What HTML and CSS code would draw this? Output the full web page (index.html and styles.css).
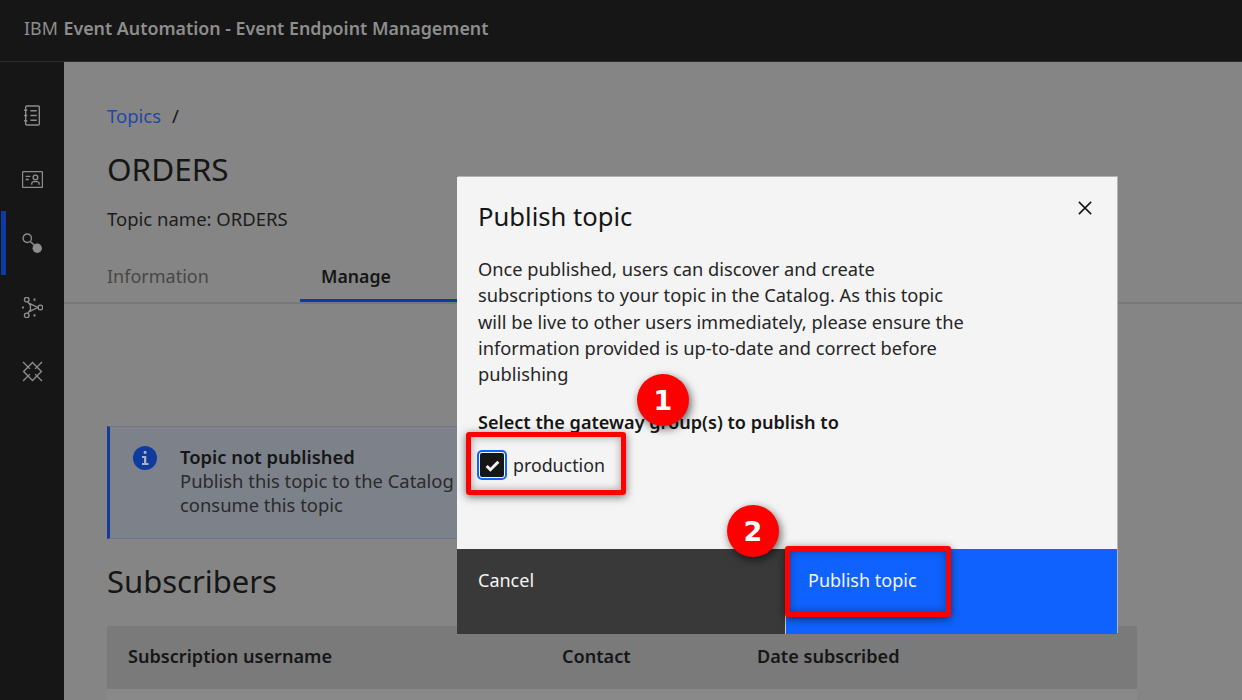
FILE: index.html
```html
<!DOCTYPE html>
<html lang="en">
<head>
    <meta charset="UTF-8">
    <meta name="viewport" content="width=device-width, initial-scale=1.0">
    <title>Publish topic</title>
    <link rel="stylesheet" href="styles.css">
</head>
<body>
    <header class="topbar">
        <span class="brand">IBM</span>&nbsp;<strong class="brand-name">Event Automation - Event Endpoint Management</strong>
    </header>

    <div class="layout">
        <nav class="sidebar">
            <a class="nav-item">
                <svg viewBox="0 0 20 20" class="nav-icon"><path d="M4.500 1h11a1 1 0 0 1 1 1v16a1 1 0 0 1-1 1h-11a1 1 0 0 1-1-1V2a1 1 0 0 1 1-1z"/><path d="M2 5h3M2 10h3M2 15h3M8 5.500h6M8 10h6M8 14.500h6"/></svg>
            </a>
            <a class="nav-item">
                <svg viewBox="0 0 20 20" class="nav-icon"><rect x="0.500" y="2.500" width="19" height="15" rx="1"/><path d="M3.500 7h4.500M3.500 10h3"/><circle cx="12.800" cy="8" r="2.200"/><path d="M9.300 15v-1a2 2 0 0 1 2-2h3a2 2 0 0 1 2 2v1"/></svg>
            </a>
            <a class="nav-item active">
                <svg viewBox="0 0 20 20" class="nav-icon"><circle cx="5" cy="5" r="4"/><path d="M8 8l4 4"/><circle class="solid" cx="14.500" cy="14.500" r="4.500"/></svg>
            </a>
            <a class="nav-item">
                <svg viewBox="0 0 20 20" class="nav-icon"><circle cx="4.500" cy="2.500" r="2.200"/><circle cx="4.500" cy="17.500" r="2.200"/><circle cx="17.500" cy="10" r="2.200"/><path d="M5.500 4.500l3 4M5.500 15.500l3-4M8 6.500v7l7-3.500z"/><path d="M0 10h1.800M11 2.500h1.800M11 17.500h1.800" stroke-width="2"/></svg>
            </a>
            <a class="nav-item">
                <svg viewBox="0 0 20 20" class="nav-icon"><path d="M1 1l6.500 6.500M19 1l-6.500 6.500M1 19l6.500-6.500M19 19l-6.500-6.500"/><path d="M10 1.500L18.500 10 10 18.500 1.500 10z"/></svg>
            </a>
        </nav>

        <main class="content">
            <div class="breadcrumb"><a class="crumb-link">Topics</a><span class="crumb-sep">/</span></div>
            <h1 class="page-title">ORDERS</h1>
            <p class="topic-name">Topic name: ORDERS</p>

            <div class="tabs">
                <a class="tab">Information</a>
                <a class="tab selected">Manage</a>
            </div>

            <section class="notification">
                <svg class="info-icon" viewBox="0 0 24 24"><circle cx="12" cy="12" r="12" fill="#0f3c9c"/><rect x="10.800" y="5" width="2.600" height="2.800" fill="#a9b3c4"/><path d="M9 10h4.300v7H15.500v2h-6.500v-2h2v-5H9z" fill="#a9b3c4"/></svg>
                <div class="notification-text">
                    <strong>Topic not published</strong><br>
                    Publish this topic to the Catalog so that users can subscribe and<br>
                    consume this topic
                </div>
            </section>

            <h2 class="section-title">Subscribers</h2>

            <div class="table-head">
                <span class="col-user">Subscription username</span>
                <span class="col-contact">Contact</span>
                <span class="col-date">Date subscribed</span>
            </div>
            <div class="table-row"></div>
        </main>
    </div>

    <div class="modal">
        <div class="modal-body">
            <svg class="modal-close" viewBox="0 0 16 16"><path d="M1 1l14 14M15 1L1 15"/></svg>
            <h3 class="modal-title">Publish topic</h3>
            <p class="modal-text">
                Once published, users can discover and create<br>
                subscriptions to your topic in the Catalog. As this topic<br>
                will be live to other users immediately, please ensure the<br>
                information provided is up-to-date and correct before<br>
                publishing
            </p>
            <p class="modal-label">Select the gateway group(s) to publish to</p>
            <label class="check-row">
                <span class="check-box">
                    <svg viewBox="0 0 16 16"><path d="M2.500 8.500l3.500 3.500L13.500 4.500"/></svg>
                </span>
                production
            </label>
        </div>
        <div class="modal-footer">
            <button class="btn btn-cancel">Cancel</button>
            <button class="btn btn-primary">Publish topic</button>
        </div>
    </div>

    <!-- tutorial annotations -->
    <div class="callout callout-check"></div>
    <div class="callout callout-publish"></div>
    <div class="step step-one">1</div>
    <div class="step step-two">2</div>
</body>
</html>
```

FILE: styles.css
```css
* {
    box-sizing: border-box;
}
html, body {
    height: 700px;
    overflow: hidden;
}
body {
    margin: 0;
    font-family: "Noto Sans", Arial, sans-serif;
    font-size: 18px;
    color: #161616;
    background: #858585;
}
.topbar {
    height: 62px;
    padding-left: 24px;
    display: flex;
    align-items: center;
    padding-bottom: 6px;
    background: #161616;
    border-bottom: 1px solid #2c2c2c;
    color: #8d8d8d;
    font-size: 17.830px;
    white-space: pre;
}
.brand-name {
    margin-left: 1px;
    font-weight: 600;
}
.layout {
    display: flex;
    height: 638px;
}
.sidebar {
    width: 64px;
    flex: none;
    padding-top: 21px;
    background: #161616;
}
.nav-item {
    height: 64px;
    display: flex;
    align-items: center;
    justify-content: center;
    margin-left: 1px;
    border-left: 5px solid transparent;
    padding-right: 6px;
}
.nav-item.active {
    border-left-color: #0f3c9c;
}
.nav-icon {
    width: 21px;
    height: 21px;
    fill: none;
    stroke: #8d8d8d;
    stroke-width: 1.300;
}
.nav-icon .solid {
    fill: #8d8d8d;
    stroke: none;
}
.content {
    flex: 1;
    min-width: 0;
}
.breadcrumb {
    height: 28px;
    margin: 39px 0 0 43px;
    display: flex;
    align-items: center;
    gap: 11px;
    font-size: 18.500px;
}
.crumb-link {
    color: #1f48a8;
}
.page-title {
    margin: 20px 0 0 43px;
    height: 40px;
    font-size: 31.500px;
    line-height: 40px;
    font-weight: 400;
}
.topic-name {
    margin: 18px 0 0 43px;
    height: 24px;
    line-height: 24px;
    font-size: 18.500px;
    color: #1c1c1c;
}
.tabs {
    display: flex;
    height: 49px;
    margin-top: 24px;
    padding-left: 22px;
    border-bottom: 2px solid #787878;
}
.tab {
    width: 214px;
    padding: 9px 21px 0;
    height: 47px;
    color: #474747;
}
.tab.selected {
    color: #161616;
    font-weight: 600;
    font-size: 17.700px;
    border-bottom: 3px solid #0f3c9c;
}
.notification {
    display: flex;
    width: 1000px;
    height: 113px;
    margin: 122px 0 0 43px;
    padding: 18px 0 0 23px;
    gap: 23px;
    background: #7d828a;
    border: 1px solid #68778f;
    border-left: 3px solid #0f3c9c;
    line-height: 24px;
    font-size: 18.400px;
    color: #2a2a2a;
}
.info-icon {
    width: 24px;
    height: 24px;
    margin-top: 1px;
    flex: none;
}
.notification-text strong {
    color: #161616;
    font-weight: 600;
}
.section-title {
    margin: 22px 0 0 43px;
    height: 40px;
    line-height: 40px;
    font-size: 31px;
    font-weight: 400;
}
.table-head {
    display: flex;
    align-items: center;
    width: 1030px;
    height: 63px;
    margin: 25px 0 0 43px;
    padding: 0 0 3px 21px;
    background: #7a7a7a;
    font-size: 18.100px;
    font-weight: 600;
}
.table-row {
    width: 1030px;
    height: 11px;
    margin-left: 43px;
    background: #898989;
}
.col-user {
    width: 434px;
}
.col-contact {
    width: 195px;
}
.modal {
    position: absolute;
    left: 457px;
    top: 177px;
    width: 660px;
    height: 457px;
    display: flex;
    flex-direction: column;
    background: #f4f4f4;
    box-shadow: 1px -1px 0 #b4b4b4;
}
.modal-body {
    flex: 1;
    position: relative;
    padding: 20px 21px 0;
}
.modal-close {
    position: absolute;
    top: 24px;
    right: 25px;
    width: 14px;
    height: 14px;
    fill: none;
    stroke: #161616;
    stroke-width: 1.800;
}
.modal-title {
    margin: 0;
    font-size: 25.600px;
    line-height: 40px;
    font-weight: 400;
}
.modal-text {
    margin: 19px 0 0;
    line-height: 26.250px;
    font-size: 18.250px;
    color: #262626;
}
.modal-label {
    margin: 22px 0 0;
    line-height: 26px;
    font-size: 18.100px;
    font-weight: 600;
}
.check-row {
    display: flex;
    align-items: center;
    gap: 7px;
    margin-top: 15px;
    height: 30px;
    font-size: 17.800px;
    color: #262626;
}
.check-box {
    width: 28px;
    height: 28px;
    display: flex;
    align-items: center;
    justify-content: center;
    background: #161616;
    border: 2px solid #f4f4f4;
    border-radius: 4px;
    outline: 2px solid #0f62fe;
    outline-offset: -1px;
}
.check-box svg {
    width: 17px;
    height: 17px;
    fill: none;
    stroke: #f4f4f4;
    stroke-width: 2.800;
}
.modal-footer {
    display: flex;
    height: 85px;
}
.btn {
    border: none;
    font: inherit;
    text-align: left;
    padding: 0 0 23px;
    color: #f4f4f4;
}
.btn-cancel {
    width: 329px;
    padding-left: 21px;
    background: #393939;
    border-right: 1px solid #c6c6c6;
}
.btn-primary {
    flex: 1;
    padding-left: 22px;
    background: #0f62fe;
}
.callout {
    position: absolute;
    border: 5px solid #ff0000;
    border-radius: 3px;
    box-shadow: 0 2px 8px rgba(0, 0, 0, 0.55), inset 0 0 8px rgba(0, 0, 0, 0.35);
}
.callout-check {
    left: 466px;
    top: 432px;
    width: 160px;
    height: 63px;
}
.callout-publish {
    left: 785px;
    top: 546px;
    width: 166px;
    height: 71px;
}
.step {
    position: absolute;
    width: 52px;
    height: 52px;
    border-radius: 50%;
    display: flex;
    align-items: center;
    justify-content: center;
    background: #ff0000;
    color: #fff;
    font-family: "DejaVu Sans", Arial, sans-serif;
    font-size: 27px;
    font-weight: 700;
    box-shadow: 2px 3px 9px rgba(0, 0, 0, 0.6);
}
.step-one {
    left: 637px;
    top: 374px;
}
.step-two {
    left: 727px;
    top: 505px;
}
```
